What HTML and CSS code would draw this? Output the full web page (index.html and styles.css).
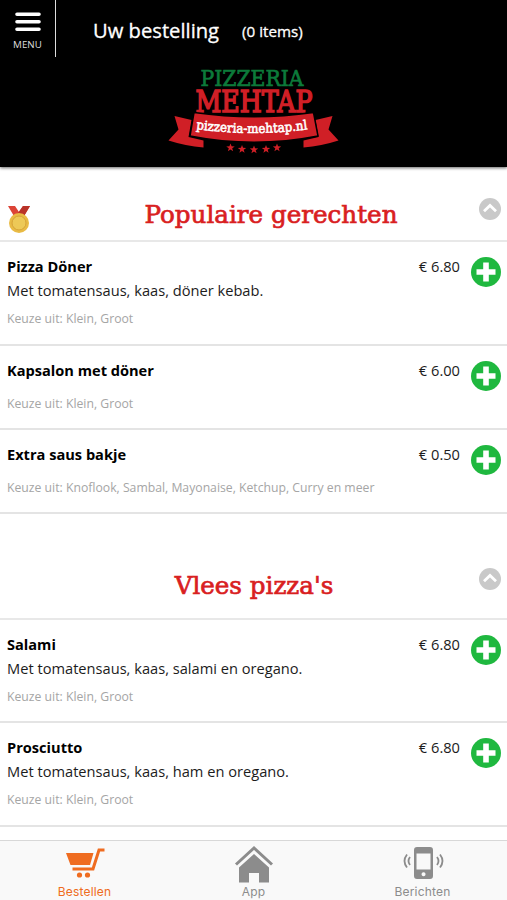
FILE: index.html
```html
<!DOCTYPE html>
<html lang="nl">
<head>
  <meta charset="utf-8">
  <title>Pizzeria Mehtap</title>
  <link rel="stylesheet" href="styles.css">
</head>
<body>
  <svg width="0" height="0" class="symbols">
    <symbol id="plus" viewBox="0 0 30 30">
      <circle cx="15" cy="15" r="15" fill="#1fb83f"/>
      <path d="M15 5.5v19M5.5 15h19" stroke="#fff" stroke-width="5.6"/>
    </symbol>
    <symbol id="up" viewBox="0 0 22 22">
      <circle cx="11" cy="11" r="11" fill="#c9c9c9"/>
      <path d="M5 13.2l6-5.8 6 5.8" fill="none" stroke="#fff" stroke-width="2.8"/>
    </symbol>
    <symbol id="star" viewBox="0 0 10 10">
      <path d="M5 .5l1.2 3.2 3.5.1-2.8 2.1 1 3.4L5 7.3 2.1 9.3l1-3.4L.3 3.8l3.5-.1z" fill="#d01f26"/>
    </symbol>
  </svg>

  <header class="header">
    <div class="topbar">
      <button class="menu-button">
        <svg width="26" height="20" viewBox="0 0 26 20">
          <path d="M2 2.2h22M2 9.8h22M2 17.3h22" stroke="#fff" stroke-width="3.6" stroke-linecap="round"/>
        </svg>
        <span>MENU</span>
      </button>
      <div class="order">Uw bestelling</div>
      <div class="order-count">(0 items)</div>
    </div>
    <svg class="logo" width="174" height="92" viewBox="166 64 174 92">
      <text class="logo-top" x="200.5" y="85.5" textLength="103" lengthAdjust="spacingAndGlyphs">PIZZERIA</text>
      <text class="logo-name" x="195.5" y="111.5" textLength="117" lengthAdjust="spacingAndGlyphs">MEHTAP</text>
      <path d="M174.5 116l17 4-3 17 15 3.5v7q-18-1.5-35-7l10-11zM332.5 116l-17 4 3 17-15 3.5v7q18-1.5 35-7l-10-11z" fill="#d01f26"/>
      <path d="M194 112.5q60 8.5 119.5 0l4.5 23.5q-64 12.5-128 0z" fill="#d01f26" stroke="#000" stroke-width="1.5"/>
      <path id="curve" d="M196 129q58 8 114 0" fill="none"/>
      <text class="logo-site"><textPath href="#curve" textLength="112" lengthAdjust="spacingAndGlyphs">pizzeria-mehtap.nl</textPath></text>
      <use href="#star" x="226" y="143" width="9" height="9"/>
      <use href="#star" x="237.5" y="144.5" width="9" height="9"/>
      <use href="#star" x="249.5" y="145" width="9" height="9"/>
      <use href="#star" x="261.5" y="144.5" width="9" height="9"/>
      <use href="#star" x="272.5" y="143" width="9" height="9"/>
    </svg>
  </header>

  <main class="content">
    <section class="category">
      <div class="category-header with-icon">
        <svg class="medal" width="24" height="28" viewBox="0 0 24 28">
          <path d="M1 0h7l4 6 4-6h7l-6.5 11h-9z" fill="#dc4437"/>
          <path d="M16 0h7l-6.5 11h-5L9.5 9z" fill="#b93329"/>
          <circle cx="12" cy="17" r="10" fill="#e9bb45"/>
          <circle cx="12" cy="17" r="7" fill="#edc957" stroke="#d6a337"/>
        </svg>
        <h2>Populaire gerechten</h2>
        <svg class="toggle" width="22" height="22"><use href="#up"/></svg>
      </div>
      <article class="dish">
        <div class="dish-info">
          <h3>Pizza Döner</h3>
          <p class="dish-text">Met tomatensaus, kaas, döner kebab.</p>
          <p class="dish-options">Keuze uit: Klein, Groot</p>
        </div>
        <span class="price">€ 6.80</span>
        <svg class="add" width="30" height="30"><use href="#plus"/></svg>
      </article>
      <article class="dish dish-small">
        <div class="dish-info">
          <h3>Kapsalon met döner</h3>
          <p class="dish-options">Keuze uit: Klein, Groot</p>
        </div>
        <span class="price">€ 6.00</span>
        <svg class="add" width="30" height="30"><use href="#plus"/></svg>
      </article>
      <article class="dish dish-small">
        <div class="dish-info">
          <h3>Extra saus bakje</h3>
          <p class="dish-options">Keuze uit: Knoflook, Sambal, Mayonaise, Ketchup, Curry en meer</p>
        </div>
        <span class="price">€ 0.50</span>
        <svg class="add" width="30" height="30"><use href="#plus"/></svg>
      </article>
    </section>

    <section class="category category-next">
      <div class="category-header">
        <h2>Vlees pizza's</h2>
        <svg class="toggle" width="22" height="22"><use href="#up"/></svg>
      </div>
      <article class="dish">
        <div class="dish-info">
          <h3>Salami</h3>
          <p class="dish-text">Met tomatensaus, kaas, salami en oregano.</p>
          <p class="dish-options">Keuze uit: Klein, Groot</p>
        </div>
        <span class="price">€ 6.80</span>
        <svg class="add" width="30" height="30"><use href="#plus"/></svg>
      </article>
      <article class="dish">
        <div class="dish-info">
          <h3>Prosciutto</h3>
          <p class="dish-text">Met tomatensaus, kaas, ham en oregano.</p>
          <p class="dish-options">Keuze uit: Klein, Groot</p>
        </div>
        <span class="price">€ 6.80</span>
        <svg class="add" width="30" height="30"><use href="#plus"/></svg>
      </article>
    </section>
  </main>

  <nav class="tabs">
    <a class="tab active">
      <svg width="40" height="38" viewBox="0 0 40 38">
        <path d="M1 12h27.5l-3.5 12H5.5z" fill="currentColor"/>
        <path d="M39.5 9h-5.5l-6 19H7.5" fill="none" stroke="currentColor" stroke-width="3"/>
        <circle cx="14.5" cy="34" r="2.6" fill="currentColor"/>
        <circle cx="22.5" cy="34" r="2.6" fill="currentColor"/>
      </svg>
      <span>Bestellen</span>
    </a>
    <a class="tab">
      <svg width="40" height="38" viewBox="0 0 40 38">
        <path d="M2 23.5L20 7l18 16.5" fill="none" stroke="currentColor" stroke-width="3"/>
        <path d="M5 26.5L20 13l15 13.5v15H25v-9.5H15v9.5H5z" fill="currentColor"/>
      </svg>
      <span>App</span>
    </a>
    <a class="tab">
      <svg width="40" height="38" viewBox="0 0 40 38">
        <path fill-rule="evenodd" d="M14 6h13q3 0 3 3v26q0 3-3 3H14q-3 0-3-3V9q0-3 3-3zm-.5 6.5v16h14v-16zm7 18.8a2 2 0 1 0 .1 0z" fill="currentColor"/>
        <path d="M7 16q-3 4 0 8M4 13.5q-5 6.5 0 13M34 16q3 4 0 8M37 13.5q5 6.5 0 13" fill="none" stroke="currentColor" stroke-width="1.8"/>
      </svg>
      <span>Berichten</span>
    </a>
  </nav>
</body>
</html>
```
FILE: styles.css
```css
* {
  box-sizing: border-box;
}

body {
  margin: 0;
  height: 900px;
  display: flex;
  flex-direction: column;
  overflow: hidden;
  background: #fff;
  font-family: "Open Sans", "Noto Sans", sans-serif;
  color: #1c1c1c;
}

h2, h3, p {
  margin: 0;
}

.symbols {
  position: absolute;
}

.header {
  flex: none;
  height: 167px;
  background: #000;
  color: #fff;
  box-shadow: 0 1px 3px rgba(0, 0, 0, 0.6);
}

.topbar {
  height: 57px;
  display: flex;
  align-items: flex-start;
}

.menu-button {
  width: 56px;
  height: 57px;
  padding: 12px 0 0;
  display: flex;
  flex-direction: column;
  align-items: center;
  background: none;
  border: none;
  border-right: 1px solid #ddd;
  color: #ddd;
  font-family: inherit;
  font-size: 9.8px;
  line-height: 13px;
}

.menu-button span {
  margin-top: 6px;
}

.order {
  margin-left: 37px;
  padding-top: 16px;
  font-size: 20.2px;
  line-height: 28px;
  -webkit-text-stroke: 0.3px #fff;
}

.order-count {
  margin-left: 23px;
  padding-top: 21px;
  font-size: 15.2px;
  line-height: 20px;
  -webkit-text-stroke: 0.3px #fff;
}

.logo {
  display: block;
  margin: 7px 0 0 166px;
  overflow: visible;
}

.logo text {
  font-family: "DejaVu Serif", serif;
}

.logo .logo-top {
  font-size: 22.5px;
  fill: #0c7a3a;
  stroke: #0c7a3a;
  stroke-width: 0.7px;
}

.logo .logo-name {
  font-size: 29px;
  fill: #d01f26;
  stroke: #d01f26;
  stroke-width: 1.6px;
}

.logo .logo-site {
  font-size: 13px;
  fill: #fff;
  stroke: #fff;
  stroke-width: 0.6px;
}

.content {
  flex: 1;
  min-height: 0;
  overflow: hidden;
  margin-top: 3px;
}

.category-header {
  display: grid;
  grid-template-columns: 36px 1fr 36px;
  height: 72px;
  padding: 0 6px 0 7px;
  border-bottom: 2px solid #e8e8e8;
}

.with-icon {
  grid-template-columns: 70px 1fr 36px;
}

.category-next .category-header {
  height: 106px;
  padding-top: 26px;
}

.category-header h2 {
  grid-column: 2;
  justify-self: center;
  padding-top: 27px;
  font-family: "DejaVu Serif", serif;
  font-size: 24.6px;
  font-weight: normal;
  line-height: 36px;
  color: #d9201f;
  white-space: nowrap;
  -webkit-text-stroke: 0.7px #d9201f;
}

.category-next h2 {
  padding-top: 28px;
}

.medal {
  margin-top: 36px;
}

.toggle {
  grid-column: 3;
  justify-self: end;
  margin-top: 28px;
}

.dish {
  display: flex;
  height: 103.5px;
  padding: 13px 6px 0 7px;
  border-bottom: 2px solid #e4e4e4;
}

.dish-small {
  height: 84px;
}

.dish-info {
  flex: 1;
}

.dish h3 {
  font-size: 14.6px;
  line-height: 22px;
  color: #000;
}

.dish-text {
  margin-top: 1px;
  font-size: 14.65px;
  line-height: 24px;
}

.dish-options {
  margin-top: 13px;
  font-size: 12.22px;
  line-height: 20px;
  color: #a5a5a5;
}

.dish-text + .dish-options {
  margin-top: 7px;
}

.price {
  margin-right: 11px;
  font-size: 14.65px;
  line-height: 22px;
}

.add {
  margin-top: 2px;
}

.tabs {
  flex: none;
  height: 60px;
  display: grid;
  grid-template-columns: repeat(3, 1fr);
  background: #f9f9f9;
  border-top: 1px solid #d8d8d8;
}

.tab {
  display: flex;
  flex-direction: column;
  align-items: center;
  color: #8c8c8c;
  font-family: Inter, "Liberation Sans", sans-serif;
  font-size: 12px;
  letter-spacing: 0.2px;
  line-height: 16px;
}

.tab svg {
  overflow: visible;
}

.tab span {
  margin-top: 5px;
}

.tab.active {
  color: #ef6c20;
}
```
